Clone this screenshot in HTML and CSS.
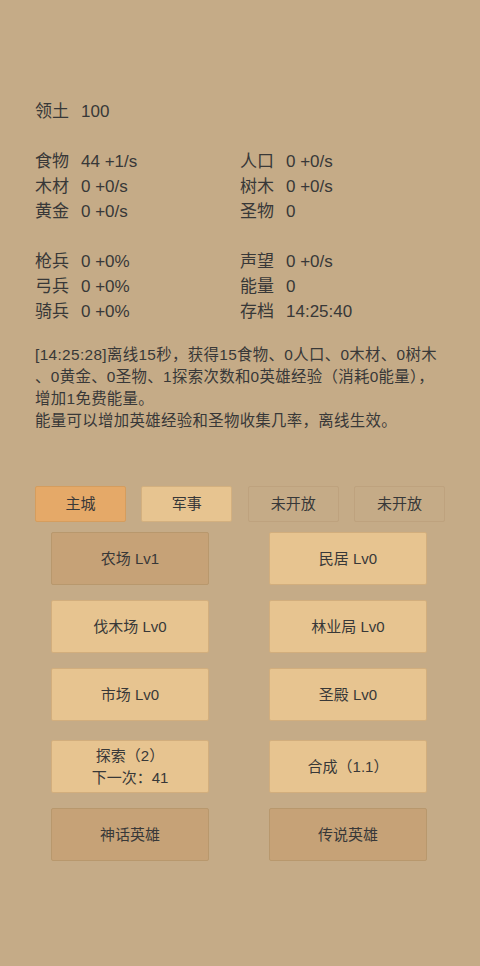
FILE: index.html
```html
<!DOCTYPE html>
<html lang="zh-CN">
<head>
    <meta charset="UTF-8">
    <meta name="viewport" content="width=device-width, initial-scale=1.0">
    <title>领地</title>
    <link rel="stylesheet" href="styles.css">
</head>
<body>
    <div class="page">
        <div class="stats">
            <div class="row"><span class="item"><span class="label">领土</span>100</span></div>
            <div class="row blank"></div>
            <div class="row"><span class="item"><span class="label">食物</span>44 +1/s</span><span class="item"><span class="label">人口</span>0 +0/s</span></div>
            <div class="row"><span class="item"><span class="label">木材</span>0 +0/s</span><span class="item"><span class="label">树木</span>0 +0/s</span></div>
            <div class="row"><span class="item"><span class="label">黄金</span>0 +0/s</span><span class="item"><span class="label">圣物</span>0</span></div>
            <div class="row blank"></div>
            <div class="row"><span class="item"><span class="label">枪兵</span>0 +0%</span><span class="item"><span class="label">声望</span>0 +0/s</span></div>
            <div class="row"><span class="item"><span class="label">弓兵</span>0 +0%</span><span class="item"><span class="label">能量</span>0</span></div>
            <div class="row"><span class="item"><span class="label">骑兵</span>0 +0%</span><span class="item"><span class="label">存档</span>14:25:40</span></div>
        </div>

        <div class="log">
            <p>[14:25:28]离线15秒，获得15食物、0人口、0木材、0树木、0黄金、0圣物、1探索次数和0英雄经验（消耗0能量），增加1免费能量。</p>
            <p>能量可以增加英雄经验和圣物收集几率，离线生效。</p>
        </div>

        <div class="tabs">
            <button class="tab active">主城</button>
            <button class="tab">军事</button>
            <button class="tab locked">未开放</button>
            <button class="tab locked">未开放</button>
        </div>

        <div class="buildings">
            <div class="btn-row">
                <button class="btn dark">农场 Lv1</button>
                <button class="btn">民居 Lv0</button>
            </div>
            <div class="btn-row">
                <button class="btn">伐木场 Lv0</button>
                <button class="btn">林业局 Lv0</button>
            </div>
            <div class="btn-row">
                <button class="btn">市场 Lv0</button>
                <button class="btn">圣殿 Lv0</button>
            </div>
            <div class="btn-row extra">
                <button class="btn">探索（2）<br>下一次：41</button>
                <button class="btn">合成（1.1）</button>
            </div>
            <div class="btn-row">
                <button class="btn dark">神话英雄</button>
                <button class="btn dark">传说英雄</button>
            </div>
        </div>
    </div>
</body>
</html>
```

FILE: styles.css
```css
html, body {
    margin: 0;
    padding: 0;
    background-color: #c5ab87;
}
body {
    font-family: "Liberation Sans", "Noto Sans CJK SC", sans-serif;
    color: #383838;
}
.page {
    width: 410px;
    padding: 99px 35px 0;
}
.stats {
    font-size: 17px;
}
.row {
    display: flex;
    height: 25px;
    line-height: 25px;
}
.item {
    width: 205px;
    white-space: nowrap;
}
.label {
    margin-right: 12px;
}
.log {
    margin-top: 20px;
    font-size: 15.4px;
    line-height: 22px;
    letter-spacing: 0.35px;
    line-break: anywhere;
}
.log p {
    margin: 0;
}
.tabs {
    display: flex;
    justify-content: space-between;
    margin-top: 54px;
}
.tab {
    width: 91px;
    height: 36px;
    font-family: inherit;
    font-size: 15px;
    color: #383838;
    background-color: #e7c490;
    border: 1px solid #d3b07f;
    border-radius: 2px;
    padding: 0 0 3px;
}
.tab.active {
    background-color: #e5a968;
    border-color: #d59d5e;
}
.tab.locked {
    background-color: #c5ab87;
    border-color: #bea27e;
}
.buildings {
    display: flex;
    flex-direction: column;
    gap: 15px;
    margin-top: 10px;
    padding: 0 18px 0 16px;
}
.btn-row {
    display: flex;
    justify-content: space-between;
}
.btn-row.extra {
    margin-top: 4px;
}
.btn {
    width: 158px;
    height: 53px;
    font-family: inherit;
    font-size: 15px;
    line-height: 22px;
    color: #383838;
    background-color: #e7c490;
    border: 1px solid #d2ae7d;
    border-radius: 2px;
    padding: 0;
}
.btn.dark {
    background-color: #c6a277;
    border-color: #b8986d;
}
```
